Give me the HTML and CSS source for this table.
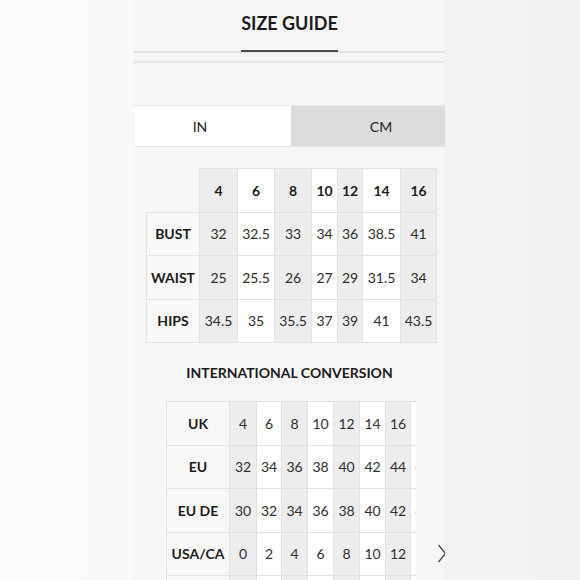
FILE: index.html
```html
<!DOCTYPE html>
<html>
<head>
<meta charset="utf-8">
<link rel="stylesheet" href="styles.css">
</head>
<body>
<div class="panel">
  <div class="header"><h1 class="title">SIZE GUIDE</h1></div>
  <div class="rule"></div>
  <div class="tabs">
    <div class="tab tab-in">IN</div>
    <div class="tab tab-cm">CM</div>
  </div>
  <table class="sizes">
    <colgroup>
      <col class="c-label">
      <col class="c38 g"><col class="c37 w"><col class="c37 g"><col class="c26 w"><col class="c25 g"><col class="c38 w"><col class="c36 g">
    </colgroup>
    <tr class="head"><td class="empty"></td><td>4</td><td>6</td><td>8</td><td>10</td><td>12</td><td>14</td><td>16</td></tr>
    <tr><th>BUST</th><td>32</td><td>32.5</td><td>33</td><td>34</td><td>36</td><td>38.5</td><td>41</td></tr>
    <tr><th>WAIST</th><td>25</td><td>25.5</td><td>26</td><td>27</td><td>29</td><td>31.5</td><td>34</td></tr>
    <tr><th>HIPS</th><td>34.5</td><td>35</td><td>35.5</td><td>37</td><td>39</td><td>41</td><td>43.5</td></tr>
  </table>
  <h2 class="subtitle">INTERNATIONAL CONVERSION</h2>
  <div class="scroller">
    <table class="conv">
      <colgroup>
        <col class="c-label2">
        <col class="c27 g"><col class="c25 w"><col class="c26 g"><col class="c26 w"><col class="c26 g"><col class="c26 w"><col class="c25 g"><col class="c26 w">
      </colgroup>
      <tr><th>UK</th><td>4</td><td>6</td><td>8</td><td>10</td><td>12</td><td>14</td><td>16</td><td>18</td></tr>
      <tr><th>EU</th><td>32</td><td>34</td><td>36</td><td>38</td><td>40</td><td>42</td><td>44</td><td>46</td></tr>
      <tr><th>EU DE</th><td>30</td><td>32</td><td>34</td><td>36</td><td>38</td><td>40</td><td>42</td><td>44</td></tr>
      <tr><th>USA/CA</th><td>0</td><td>2</td><td>4</td><td>6</td><td>8</td><td>10</td><td>12</td><td>14</td></tr>
      <tr><th></th><td></td><td></td><td></td><td></td><td></td><td></td><td></td><td></td></tr>
    </table>
  </div>
  <svg class="chevron" width="10" height="19" viewBox="0 0 10 19"><polyline points="1.5,1 8.5,9.5 1.5,18" fill="none" stroke="#4a4a4a" stroke-width="1.3"/></svg>
</div>
</body>
</html>
```
FILE: styles.css
```css
html, body {
  margin: 0;
  padding: 0;
  height: 580px;
  overflow: hidden;
}
body {
  background: linear-gradient(to right, #fcfcfc, #f6f6f6 50%, #f2f2f2);
  font-family: Lato, "Open Sans", sans-serif;
  color: #222;
}
.panel {
  position: relative;
  width: 311px;
  height: 580px;
  margin-left: 134px;
  background: #f6f6f6;
  box-shadow: 0 0 2px rgba(0,0,0,0.06);
  overflow: hidden;
}
.header {
  height: 51px;
  border-bottom: 2px solid #e2e2e2;
  display: flex;
  justify-content: center;
  align-items: flex-end;
}
.title {
  margin: 0 0 -1px;
  font-size: 18px;
  line-height: 18px;
  font-weight: 700;
  letter-spacing: 0;
  color: #1c1c1c;
  padding-bottom: 18px;
  border-bottom: 2px solid #4d4d4d;
}
.rule {
  margin-top: 8px;
  height: 2px;
  background: #e6e6e6;
}
.tabs {
  margin-top: 42px;
  display: grid;
  grid-template-columns: 157px 154px;
  height: 40px;
  border-top: 1px solid #e8e8e8;
  border-bottom: 1px solid #e4e4e4;
}
.tab {
  display: flex;
  align-items: center;
  justify-content: center;
  font-size: 14px;
  color: #222;
}
.tab-in {
  background: #ffffff;
  padding-right: 25px;
}
.tab-cm {
  background: #dcdcdc;
  padding-left: 26px;
}
table {
  border-collapse: collapse;
  table-layout: fixed;
  font-size: 14px;
}
td, th {
  border: 1px solid #e2e2e2;
  height: 42.5px;
  padding: 0;
  text-align: center;
  vertical-align: middle;
  white-space: nowrap;
  overflow: hidden;
}
th {
  font-weight: 700;
  color: #1c1c1c;
  background: #f8f8f8;
}
td {
  color: #2e2e2e;
}
.sizes {
  width: 290px;
  margin: 21px 0 0 12px;
}
.sizes .head td {
  font-weight: 700;
  color: #1c1c1c;
}
.sizes .empty {
  border: none;
  background: #f6f6f6;
}
.g { background: #ededed; }
.w { background: #ffffff; }
.c-label { width: 53px; }
.c-label2 { width: 63px; }
.c38 { width: 38px; }
.c37 { width: 37px; }
.c36 { width: 36px; }
.c27 { width: 27px; }
.c26 { width: 26px; }
.c25 { width: 25px; }
.subtitle {
  margin: 20px 0 18px;
  font-size: 14px;
  line-height: 20px;
  font-weight: 700;
  letter-spacing: 0;
  text-align: center;
  color: #1c1c1c;
}
.scroller {
  margin-left: 32px;
  width: 250px;
  overflow: hidden;
}
.conv {
  width: 270px;
}
.chevron {
  position: absolute;
  left: 303px;
  top: 544px;
}
```
